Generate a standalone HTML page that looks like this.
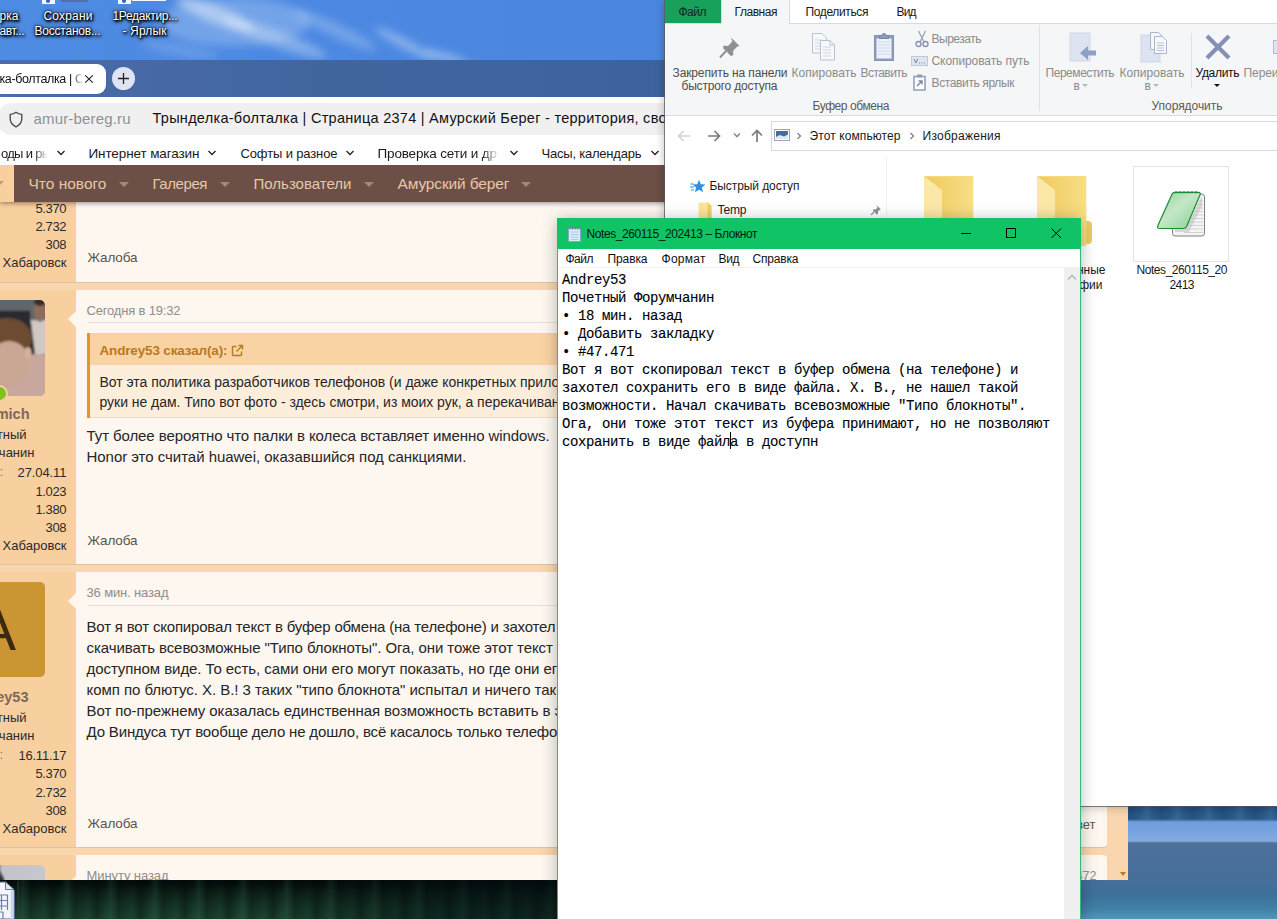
<!DOCTYPE html>
<html lang="ru"><head><meta charset="utf-8"><title>Desktop</title>
<style>
html,body{margin:0;padding:0}
body{width:1277px;height:919px;overflow:hidden;position:relative;background:#4c88e0;font-family:"Liberation Sans",sans-serif}
.a{position:absolute}
.t{position:absolute;white-space:pre;display:block}
#wall-sky{left:0;top:0;width:1277px;height:62px;background:linear-gradient(to right,#4e8be3 0%,#4c89e2 20%,#4b87e0 50%,#4983dc 100%)}
#wall-dark{left:0;top:878px;width:560px;height:41px;background:linear-gradient(to right,rgba(2,12,16,0) 50%,rgba(2,12,16,.5) 80%,rgba(2,12,16,.55) 100%),repeating-linear-gradient(to right,rgba(0,0,0,0) 0,rgba(0,0,0,.3) 9px,rgba(0,0,0,0) 17px,rgba(70,120,90,.16) 23px,rgba(0,0,0,.22) 31px,rgba(0,0,0,0) 44px),linear-gradient(to bottom,#040b0b 0,#050e0d 6px,#0c2119 14px,#153526 27px,#1b4532 41px)}
#wall-lake{left:1078px;top:800px;width:199px;height:119px;background:repeating-linear-gradient(to right,rgba(120,170,190,0) 0,rgba(120,170,190,.16) 7px,rgba(120,170,190,0) 13px,rgba(10,30,70,.15) 22px,rgba(120,170,190,0) 31px) 0 0/100% 20px no-repeat,linear-gradient(to bottom,#1f4c86 0px,#255489 8px,#2c5c8c 19px,#6e9edb 22px,#79a5e0 34px,#86abdf 41px,#4c719b 43px,#476f99 75px,#3e7099 95px,#3f7fa6 108px,#5097b7 119px)}
#br{left:0;top:60px;width:1128px;height:820px;background:#fff;overflow:hidden}
#ex{left:665px;top:0;width:620px;height:806px;background:#fff;overflow:hidden;box-shadow:0 0 0 1px rgba(90,90,90,.75),0 0 10px rgba(0,0,0,.3)}
#np{left:557px;top:218px;width:524px;height:710px;background:#fff;box-shadow:0 2px 15px rgba(0,0,0,.28)}
</style></head><body>
<div class="a" id="wall-sky"><svg class="a" style="left:0;top:0" width="670" height="62" viewBox="0 0 670 62"><defs><filter id="sb" x="-20%" y="-50%" width="140%" height="200%"><feGaussianBlur stdDeviation="4"/></filter></defs><g filter="url(#sb)" fill="#fff">
<ellipse cx="235" cy="22" rx="75" ry="24" opacity=".22"/>
<ellipse cx="215" cy="14" rx="42" ry="9" transform="rotate(22 215 14)" opacity=".42"/>
<ellipse cx="275" cy="38" rx="55" ry="8" transform="rotate(20 275 38)" opacity=".3"/>
<ellipse cx="335" cy="30" rx="45" ry="7" transform="rotate(25 335 30)" opacity=".22"/>
<ellipse cx="405" cy="44" rx="34" ry="4.500" transform="rotate(28 405 44)" opacity=".36"/>
<ellipse cx="447" cy="58" rx="24" ry="4" transform="rotate(18 447 58)" opacity=".4"/>
<ellipse cx="180" cy="50" rx="40" ry="6" transform="rotate(10 180 50)" opacity=".15"/>
</g></svg></div>
<div class="a" id="wall-dark"></div>
<div class="a" id="wall-lake"></div>

<div class="a" style="left:42px;top:0;width:13px;height:4px;background:#f4f6fa"></div><div class="a" style="left:46px;top:0;width:4px;height:3px;background:#3f62b5;border-radius:0 0 2px 2px"></div>
<div class="a" style="left:61px;top:0;width:27px;height:1.5px;background:#536fa8"></div>
<div class="a" style="left:118px;top:0;width:13px;height:4px;background:#f4f6fa"></div><div class="a" style="left:122px;top:0;width:4px;height:3px;background:#3f62b5;border-radius:0 0 2px 2px"></div>
<div class="a" style="left:132px;top:0;width:34px;height:1px;background:#f4f6fa"></div>
<span class="t" style='left:-0.5px;top:8px;font-size:12px;line-height:16px;color:#fff;letter-spacing:0.062px;text-shadow:1px 1px 2px #000,0 0 4px #000,0 0 2px #000,1px 2px 3px #000;'>рка</span>
<span class="t" style='left:-0.5px;top:23px;font-size:12px;line-height:16px;color:#fff;letter-spacing:-0.391px;text-shadow:1px 1px 2px #000,0 0 4px #000,0 0 2px #000,1px 2px 3px #000;'>авт...</span>
<span class="t" style='left:43.5px;top:8px;font-size:12px;line-height:16px;color:#fff;letter-spacing:0.185px;text-shadow:1px 1px 2px #000,0 0 4px #000,0 0 2px #000,1px 2px 3px #000;'>Сохрани</span>
<span class="t" style='left:34.5px;top:23px;font-size:12px;line-height:16px;color:#fff;letter-spacing:-0.217px;text-shadow:1px 1px 2px #000,0 0 4px #000,0 0 2px #000,1px 2px 3px #000;'>Восстанов...</span>
<span class="t" style='left:112.5px;top:8px;font-size:12px;line-height:16px;color:#fff;letter-spacing:-0.318px;text-shadow:1px 1px 2px #000,0 0 4px #000,0 0 2px #000,1px 2px 3px #000;'>1Редактир...</span>
<span class="t" style='left:122.5px;top:23px;font-size:12px;line-height:16px;color:#fff;letter-spacing:0.143px;text-shadow:1px 1px 2px #000,0 0 4px #000,0 0 2px #000,1px 2px 3px #000;'>- Ярлык</span>
<div class="a" id="br">
<div class="a" style="left:0;top:0;width:1128px;height:37px;background:linear-gradient(to right,#4b6da9 0%,#40659f 30%,#39609e 100%)"></div>
<div class="a" style="left:-20px;top:4px;width:126px;height:30px;background:#fff;border-radius:9px"></div>
<div class="a" style="left:111.5px;top:6.5px;width:23px;height:23px;border-radius:50%;background:#dfe3f3"></div>
<svg class="a" style="left:111.5px;top:6.5px" width="23" height="23" viewBox="0 0 23 23"><path d="M6 11.5h11M11.5 6v11" stroke="#222" stroke-width="1.3" fill="none"/></svg>
<svg class="a" style="left:83px;top:13px" width="12" height="12" viewBox="0 0 12 12"><path d="M2.200 2.300l7.600 7.400M9.800 2.300l-7.600 7.400" stroke="#222" stroke-width="1.100" fill="none"/></svg>
<div class="a" style="left:-4px;top:43px;width:1200px;height:32px;background:#f0f0f1;border-radius:16px"></div>
<svg class="a" style="left:9px;top:51px" width="14" height="17" viewBox="0 0 14 17"><path d="M7 1.2C5.2 2.6 3.3 3.2 1.2 3.4v4.4c0 3.6 2.2 6.3 5.8 8 3.6-1.700 5.800-4.400 5.800-8V3.400C10.700 3.200 8.800 2.600 7 1.200z" stroke="#444" stroke-width="1.300" fill="none" stroke-linejoin="round"/></svg>

<div class="a" style="left:0;top:-60px;width:0;height:0">
<span class="t" style='left:-0.5px;top:70.5px;font-size:12.5px;line-height:16px;color:#111;letter-spacing:-0.374px;-webkit-mask-image:linear-gradient(to right,#000 0,#000 72px,transparent 83px);mask-image:linear-gradient(to right,#000 0,#000 72px,transparent 83px);'>ка-болталка | С</span>
<span class="t" style='left:33.5px;top:108.5px;font-size:15px;line-height:20px;color:#8f9094;letter-spacing:0.163px;'>amur-bereg.ru</span>
<span class="t" style='left:152.5px;top:109px;font-size:14.5px;line-height:19px;color:#111;letter-spacing:0.274px;'>Трынделка-болталка | Страница 2374 | Амурский Берег - территория, сво</span>
<span class="t" style='left:1px;top:144.5px;font-size:13px;line-height:17px;color:#1a1a1a;letter-spacing:-0.705px;-webkit-mask-image:linear-gradient(to right,#000 0,#000 33px,transparent 47px);mask-image:linear-gradient(to right,#000 0,#000 33px,transparent 47px);'>оды и ры</span>
<span class="t" style='left:88.5px;top:144.5px;font-size:13.5px;line-height:18px;color:#1a1a1a;letter-spacing:-0.108px;'>Интернет магазин</span>
<span class="t" style='left:240.5px;top:145px;font-size:13px;line-height:17px;color:#1a1a1a;letter-spacing:-0.133px;'>Софты и разное</span>
<span class="t" style='left:377.5px;top:144.5px;font-size:13.5px;line-height:18px;color:#1a1a1a;letter-spacing:-0.163px;-webkit-mask-image:linear-gradient(to right,#000 0,#000 105px,transparent 121px);mask-image:linear-gradient(to right,#000 0,#000 105px,transparent 121px);'>Проверка сети и др.</span>
<span class="t" style='left:541.5px;top:145px;font-size:13px;line-height:17px;color:#1a1a1a;letter-spacing:-0.213px;'>Часы, календарь</span>
<svg class="a" style="left:55.5px;top:149px" width="10" height="8" viewBox="0 0 10 8"><path d="M1.5 2l3.500 3.500L8.500 2" stroke="#222" stroke-width="1.300" fill="none"/></svg>
<svg class="a" style="left:207px;top:149px" width="10" height="8" viewBox="0 0 10 8"><path d="M1.5 2l3.500 3.500L8.500 2" stroke="#222" stroke-width="1.300" fill="none"/></svg>
<svg class="a" style="left:344.5px;top:149px" width="10" height="8" viewBox="0 0 10 8"><path d="M1.5 2l3.500 3.500L8.500 2" stroke="#222" stroke-width="1.300" fill="none"/></svg>
<svg class="a" style="left:508.5px;top:149px" width="10" height="8" viewBox="0 0 10 8"><path d="M1.5 2l3.500 3.500L8.500 2" stroke="#222" stroke-width="1.300" fill="none"/></svg>
<svg class="a" style="left:650px;top:149px" width="10" height="8" viewBox="0 0 10 8"><path d="M1.5 2l3.500 3.500L8.500 2" stroke="#222" stroke-width="1.300" fill="none"/></svg>
</div>
<div class="a" id="forum" style="left:0;top:105px;width:1128px;height:715px;background:#f9d6ae;overflow:hidden">
<div class="a" style="left:-4px;top:30px;width:1111px;height:88px;background:#fdf7f0;border-bottom:1px solid #dcc3a8;border-radius:4px;box-sizing:border-box"></div>
<div class="a" style="left:0;top:30px;width:76.400px;height:87px;background:#f8cf9f"></div>
<div class="a" style="left:-4px;top:125px;width:1111px;height:275px;background:#fdf7f0;border-bottom:1px solid #dcc3a8;border-radius:4px;box-sizing:border-box"></div>
<div class="a" style="left:0;top:125px;width:76.400px;height:274px;background:#f8cf9f"></div>
<div class="a" style="left:-4px;top:407px;width:1111px;height:276px;background:#fdf7f0;border-bottom:1px solid #dcc3a8;border-radius:4px;box-sizing:border-box"></div>
<div class="a" style="left:0;top:407px;width:76.400px;height:275px;background:#f8cf9f"></div>
<div class="a" style="left:-4px;top:690px;width:1111px;height:45px;background:#fdf7f0;border-bottom:1px solid #dcc3a8;border-radius:4px;box-sizing:border-box"></div>
<div class="a" style="left:0;top:690px;width:76.400px;height:44px;background:#f8cf9f"></div>
<div class="a" style="left:68px;top:146px;width:0;height:0;border-style:solid;border-width:8px 8px 8px 0;border-color:transparent #fdf7f0 transparent transparent"></div>
<div class="a" style="left:68px;top:428px;width:0;height:0;border-style:solid;border-width:8px 8px 8px 0;border-color:transparent #fdf7f0 transparent transparent"></div>
<div class="a" style="left:68px;top:711px;width:0;height:0;border-style:solid;border-width:8px 8px 8px 0;border-color:transparent #fdf7f0 transparent transparent"></div>
<div class="a" style="left:87px;top:157px;width:1010px;height:1px;background:#e6dbe0"></div>
<div class="a" style="left:87px;top:440px;width:1010px;height:1px;background:#e6dbe0"></div>
<div class="a" style="left:0;top:0;width:1128px;height:37px;background:#6c4f47;box-shadow:0 1px 5px rgba(0,0,0,.45)"></div>
<div class="a" style="left:0;top:0;width:14px;height:37px;background:#f8cf9f"></div>
<div class="a" style="left:-6px;top:16px;width:0;height:0;border-style:solid;border-width:5px 5px 0 5px;border-color:#c79a62 transparent transparent transparent"></div>
<div class="a" style="left:119px;top:17px;width:0;height:0;border-style:solid;border-width:5px 5px 0 5px;border-color:#a98771 transparent transparent transparent"></div>
<div class="a" style="left:220px;top:17px;width:0;height:0;border-style:solid;border-width:5px 5px 0 5px;border-color:#a98771 transparent transparent transparent"></div>
<div class="a" style="left:363.5px;top:17px;width:0;height:0;border-style:solid;border-width:5px 5px 0 5px;border-color:#a98771 transparent transparent transparent"></div>
<div class="a" style="left:521px;top:17px;width:0;height:0;border-style:solid;border-width:5px 5px 0 5px;border-color:#a98771 transparent transparent transparent"></div>
<svg class="a" style="left:-51px;top:135px;border-radius:5px" width="96" height="96" viewBox="0 0 96 96"><defs><filter id="bl" x="-10%" y="-10%" width="120%" height="120%"><feGaussianBlur stdDeviation="1.300"/></filter><clipPath id="cp"><rect width="96" height="96" rx="5"/></clipPath></defs>
<g clip-path="url(#cp)"><rect width="96" height="96" fill="#60666a"/><g filter="url(#bl)">
<rect x="-5" y="11" width="86" height="22" fill="#2a2c2f"/>
<rect x="82" y="20" width="20" height="34" fill="#d0c9c3"/>
<path d="M76 24l6-2 4 32h-10z" fill="#2c2c2e"/>
<ellipse cx="91" cy="11" rx="6.500" ry="11" fill="#8d6c5c"/>
<ellipse cx="91" cy="2" rx="6" ry="4" fill="#3a2e28"/>
<rect x="-5" y="80" width="110" height="20" fill="#c4a193"/>
<ellipse cx="90" cy="84" rx="32" ry="30" fill="#c8a89c"/>
<ellipse cx="58" cy="38" rx="25" ry="20" fill="#6d4c33"/>
<ellipse cx="60" cy="64" rx="21" ry="23" fill="#caa695"/>
<ellipse cx="79" cy="53" rx="3.500" ry="6" fill="#d6b09e"/>
<path d="M40 44q18-10 36 2l-2-12-30-4z" fill="#6d4c33"/>
</g></g></svg>
<div class="a" style="left:-9px;top:220px;width:13px;height:13px;border-radius:50%;background:#7dc31f;border:2px solid #f8cf9f"></div>

<div class="a" style="left:-51px;top:417px;width:96px;height:95px;border-radius:5px;background:#cc9534;overflow:hidden"><span class="t" style="left:0;top:0;width:96px;text-align:center;font-size:57px;line-height:96px;color:#3b2a10">A</span></div>
<div class="a" style="left:-51px;top:700px;width:96px;height:40px;border-radius:5px;background:radial-gradient(ellipse 9px 22px at 49px 26px,#2b2a28 0,#3a3836 70%,rgba(60,58,56,0) 100%),linear-gradient(to right,#333 0,#555 48px,#c3c3c7 53px,#c8c8cc 96px)"></div>
<div class="a" style="left:87px;top:168px;width:1010px;height:84px;background:#fdeddb;border-bottom:1px solid #efdcc6"></div>
<div class="a" style="left:87px;top:168px;width:1010px;height:32px;background:#f9d3a4"></div>
<div class="a" style="left:87px;top:168px;width:3px;height:85px;background:#e8961d"></div>
<svg class="a" style="left:231px;top:179px" width="13" height="13" viewBox="0 0 13 13"><path d="M5.500 2.500H2.200a.7.7 0 0 0-.7.7v7.600a.7.7 0 0 0 .7.7h7.600a.7.7 0 0 0 .7-.7V7.500M7.500 1.500h4v4M11.500 1.500L5.500 7.500" stroke="#b9791f" stroke-width="1.400" fill="none"/></svg>
<div class="a" style="left:0;top:-165px;width:0;height:0">
<span class="t" style='left:28.5px;top:174px;font-size:15.5px;line-height:20px;color:#e6c8a6;letter-spacing:0.002px;'>Что нового</span>
<span class="t" style='left:152.5px;top:174px;font-size:15px;line-height:20px;color:#e6c8a6;letter-spacing:-0.422px;'>Галерея</span>
<span class="t" style='left:253.5px;top:174px;font-size:15px;line-height:20px;color:#e6c8a6;letter-spacing:0.009px;'>Пользователи</span>
<span class="t" style='left:397.5px;top:174px;font-size:15.5px;line-height:20px;color:#e6c8a6;letter-spacing:-0.135px;'>Амурский берег</span>
<span class="t" style='left:35.5px;top:200px;font-size:13px;line-height:17px;color:#2b2b2b;letter-spacing:-0.387px;'>5.370</span>
<span class="t" style='left:35.5px;top:218.1px;font-size:13px;line-height:17px;color:#2b2b2b;letter-spacing:-0.387px;'>2.732</span>
<span class="t" style='left:45.5px;top:236.2px;font-size:13px;line-height:17px;color:#2b2b2b;letter-spacing:-0.352px;'>308</span>
<span class="t" style='left:2.5px;top:254.3px;font-size:13px;line-height:17px;color:#2b2b2b;letter-spacing:0.039px;'>Хабаровск</span>
<span class="t" style='left:87.5px;top:248.5px;font-size:13.5px;line-height:18px;color:#5d5349;letter-spacing:-0.119px;'>Жалоба</span>
<span class="t" style='left:87.5px;top:531.5px;font-size:13.5px;line-height:18px;color:#5d5349;letter-spacing:-0.119px;'>Жалоба</span>
<span class="t" style='left:87.5px;top:814.5px;font-size:13.5px;line-height:18px;color:#5d5349;letter-spacing:-0.119px;'>Жалоба</span>
<span class="t" style='left:86.5px;top:302px;font-size:13px;line-height:17px;color:#8e8e8e;letter-spacing:-0.177px;'>Сегодня в 19:32</span>
<span class="t" style='left:86.5px;top:584px;font-size:13px;line-height:17px;color:#8e8e8e;letter-spacing:-0.143px;'>36 мин. назад</span>
<span class="t" style='left:86.5px;top:867px;font-size:13px;line-height:17px;color:#8e8e8e;letter-spacing:-0.094px;'>Минуту назад</span>
<span class="t" style='left:99.5px;top:341.5px;font-size:13.5px;line-height:18px;color:#b9791f;font-weight:700;letter-spacing:-0.157px;'>Andrey53 сказал(а):</span>
<span class="t" style='left:99.5px;top:372.5px;font-size:14px;line-height:18px;color:#262626;letter-spacing:-0.029px;'>Вот эта политика разработчиков телефонов (и даже конкретных прило</span>
<span class="t" style='left:99.5px;top:393px;font-size:14px;line-height:18px;color:#262626;letter-spacing:-0.031px;'>руки не дам. Типо вот фото - здесь смотри, из моих рук, а перекачиван</span>
<span class="t" style='left:86.5px;top:426px;font-size:15px;line-height:20px;color:#262626;letter-spacing:-0.088px;'>Тут более вероятно что палки в колеса вставляет именно windows.</span>
<span class="t" style='left:86.5px;top:447px;font-size:15px;line-height:20px;color:#262626;letter-spacing:-0.032px;'>Honor это считай huawei, оказавшийся под санкциями.</span>
<span class="t" style='left:-4.34375px;top:404.5px;font-size:14.5px;line-height:19px;color:#7d6858;font-weight:700;'>mich</span>
<span class="t" style='left:-33.1094px;top:425.5px;font-size:13px;line-height:17px;color:#2b2b2b;'>Почетный</span>
<span class="t" style='left:-40.625px;top:443.5px;font-size:13px;line-height:17px;color:#2b2b2b;'>Форумчанин</span>
<span class="t" style='left:-0.5px;top:463px;font-size:13.5px;line-height:18px;color:#8a7768;'>:</span>
<span class="t" style='left:17.5px;top:464.1px;font-size:13px;line-height:17px;color:#2b2b2b;letter-spacing:-0.092px;'>27.04.11</span>
<span class="t" style='left:35.5px;top:482.6px;font-size:13px;line-height:17px;color:#2b2b2b;letter-spacing:-0.387px;'>1.023</span>
<span class="t" style='left:35.5px;top:500.6px;font-size:13px;line-height:17px;color:#2b2b2b;letter-spacing:-0.387px;'>1.380</span>
<span class="t" style='left:45.5px;top:519.1px;font-size:13px;line-height:17px;color:#2b2b2b;letter-spacing:-0.352px;'>308</span>
<span class="t" style='left:2.5px;top:537.1px;font-size:13px;line-height:17px;color:#2b2b2b;letter-spacing:0.039px;'>Хабаровск</span>
<span class="t" style='left:86.5px;top:617px;font-size:15px;line-height:20px;color:#262626;letter-spacing:-0.182px;'>Вот я вот скопировал текст в буфер обмена (на телефоне) и захотел</span>
<span class="t" style='left:86.5px;top:638px;font-size:15px;line-height:20px;color:#262626;letter-spacing:-0.079px;'>скачивать всевозможные &quot;Типо блокноты&quot;. Ога, они тоже этот текст</span>
<span class="t" style='left:86.5px;top:659px;font-size:15px;line-height:20px;color:#262626;letter-spacing:-0.069px;'>доступном виде. То есть, сами они его могут показать, но где они ег</span>
<span class="t" style='left:86.5px;top:680px;font-size:15px;line-height:20px;color:#262626;letter-spacing:-0.04px;'>комп по блютус. Х. В.! 3 таких &quot;типо блокнота&quot; испытал и ничего так</span>
<span class="t" style='left:86.5px;top:701px;font-size:15px;line-height:20px;color:#262626;letter-spacing:-0.07px;'>Вот по-прежнему оказалась единственная возможность вставить в э</span>
<span class="t" style='left:86.5px;top:722px;font-size:15px;line-height:20px;color:#262626;letter-spacing:-0.163px;'>До Виндуса тут вообще дело не дошло, всё касалось только телефон</span>
<span class="t" style='left:-37.5938px;top:687.5px;font-size:14.5px;line-height:19px;color:#7d6858;font-weight:700;'>Andrey53</span>
<span class="t" style='left:-33.1094px;top:708.5px;font-size:13px;line-height:17px;color:#2b2b2b;'>Почетный</span>
<span class="t" style='left:-40.625px;top:726.5px;font-size:13px;line-height:17px;color:#2b2b2b;'>Форумчанин</span>
<span class="t" style='left:-0.5px;top:746px;font-size:13.5px;line-height:18px;color:#8a7768;'>:</span>
<span class="t" style='left:18.5px;top:747.1px;font-size:13px;line-height:17px;color:#2b2b2b;letter-spacing:-0.234px;'>16.11.17</span>
<span class="t" style='left:35.5px;top:765.1px;font-size:13px;line-height:17px;color:#2b2b2b;letter-spacing:-0.387px;'>5.370</span>
<span class="t" style='left:35.5px;top:783.6px;font-size:13px;line-height:17px;color:#2b2b2b;letter-spacing:-0.387px;'>2.732</span>
<span class="t" style='left:45.5px;top:802.1px;font-size:13px;line-height:17px;color:#2b2b2b;letter-spacing:-0.352px;'>308</span>
<span class="t" style='left:2.5px;top:820.1px;font-size:13px;line-height:17px;color:#2b2b2b;letter-spacing:0.039px;'>Хабаровск</span>
<span class="t" style='left:1059.91px;top:815.5px;font-size:13px;line-height:17px;color:#5d5349;'>Ответ</span>
<span class="t" style='left:1051.31px;top:867.5px;font-size:12.5px;line-height:16px;color:#8e8e8e;'>#47.472</span>
</div>
<div class="a" style="left:1120px;top:707px;width:0;height:0;border-style:solid;border-width:4px 3.5px 0 3.5px;border-color:#b9791f transparent transparent transparent"></div>
</div>
</div>
<svg class="a" style="left:0;top:881px" width="20" height="38" viewBox="0 0 20 38"><path d="M-6 1H5.500l8.800 8.500V38H-6z" fill="#f3f5fb" stroke="#55668a" stroke-width="1.200"/><path d="M5.500 1v7.500h8.500z" fill="#dfe6f3" stroke="#6a7a9c" stroke-width="1"/><path d="M-2 14h9.500v15M-2 19.500h9.500M-2 25h9.500M1.500 14v15M-2 31v7M3 31v7M-2 31h5" stroke="#6b7fa8" stroke-width="1.200" fill="none"/><path d="M12 10v28" stroke="#c9d3ea" stroke-width="2.500"/><path d="M18 0v38" stroke="#2c3f3a" stroke-width="1"/></svg>
<div class="a" id="ex">
<div class="a" style="left:0;top:23px;width:620px;height:93px;background:#f5f6f7;border-top:1px solid #dadbdc;border-bottom:1px solid #dadbdc;box-sizing:border-box"></div>
<div class="a" style="left:0;top:0;width:56px;height:23px;background:#19a05b"></div>
<div class="a" style="left:56px;top:0;width:69px;height:24px;background:#f5f6f7;border:1px solid #dadbdc;border-bottom:none;border-top:none;box-sizing:border-box"></div>
<div class="a" style="left:374px;top:25px;width:1px;height:86px;background:#e2e3e4"></div>
<div class="a" style="left:526px;top:33px;width:1px;height:55px;background:#e2e3e4"></div>
<div class="a" style="left:106px;top:121px;width:520px;height:30px;border:1px solid #d9d9d9;box-sizing:border-box;background:#fff"></div>
<div class="a" style="left:221px;top:157px;width:1px;height:660px;background:#f0f0f0"></div>

<svg class="a" style="left:52px;top:34px" width="26" height="26" viewBox="0 0 26 26"><path d="M14 3.500l8.500 8.500-2.200.6-4.300 4.300.4 4.100-2.500 1-8-8 1-2.500 4.100.4 4.300-4.300z" fill="#8e9094"/><path d="M9 17l-6 6.500" stroke="#8e9094" stroke-width="2"/></svg>
<svg class="a" style="left:145px;top:32px" width="28" height="30" viewBox="0 0 28 30"><path d="M2.500 1.500h9.500l4.500 4.500v15h-14z" fill="#f6f8fb" stroke="#b8c2d3"/><path d="M5 8h8M5 11h8M5 14h8M5 17h8" stroke="#d0d7e4"/><path d="M10.500 8.500h9.500l4.500 4.500v15h-14z" fill="#f6f8fb" stroke="#b8c2d3"/><path d="M13 15h8M13 18h8M13 21h8M13 24h8" stroke="#d0d7e4"/><path d="M20 8.500v4.500h4.500" fill="none" stroke="#b8c2d3"/></svg>
<svg class="a" style="left:208px;top:31px" width="22" height="31" viewBox="0 0 22 31"><rect x="1.500" y="4.500" width="19" height="25" fill="#8e9bbb" stroke="#8593b5"/><rect x="3.500" y="7.500" width="15" height="20" fill="#eef2fa"/><path d="M5 11h12M5 14h12M5 17h12M5 20h12M5 23h12" stroke="#cfd8ea"/><path d="M6.500 7.500v-3h2.500a2 2 0 0 1 4 0h2.500v3z" fill="#8e9bbb" stroke="#7986a8"/></svg>
<svg class="a" style="left:249.500px;top:30px" width="14" height="18" viewBox="0 0 14 18"><path d="M3.500 1l5.500 11M10.500 1L5 12" stroke="#9aa0b0" stroke-width="1.300" fill="none"/><circle cx="3.500" cy="14" r="2.500" fill="none" stroke="#8a93b3" stroke-width="1.400"/><circle cx="10.500" cy="14" r="2.500" fill="none" stroke="#8a93b3" stroke-width="1.400"/></svg>
<svg class="a" style="left:246px;top:56px" width="17" height="11" viewBox="0 0 17 11"><rect x=".5" y=".5" width="16" height="9" fill="#dfe4f0" stroke="#c0c8dc"/><path d="M3 3l2 4 1.500-4M8 7h1M10.500 7h1M13 7h1" stroke="#7b84a3" stroke-width="1" fill="none"/></svg>
<svg class="a" style="left:248px;top:74px" width="13" height="17" viewBox="0 0 13 17"><rect x="1" y="2.500" width="11" height="13.500" fill="#fff" stroke="#8e9bbb" stroke-width="1.500"/><rect x="4" y=".5" width="5" height="3" fill="#8e9bbb"/><path d="M4 12l4.500-4.500M5.500 7h3.500v3.500" stroke="#7986a8" stroke-width="1.400" fill="none"/></svg>
<svg class="a" style="left:404px;top:32px" width="30" height="31" viewBox="0 0 30 31"><rect x="1" y="1" width="20" height="28" fill="#dde3f0" stroke="#d0d7e8"/><path d="M27 18.500h-8v-4.500l-8 7 8 7v-4.500h8z" fill="#8ea0c4"/></svg>
<svg class="a" style="left:475px;top:31px" width="30" height="32" viewBox="0 0 30 32"><rect x="1" y="4" width="19" height="27" fill="#dde3f0" stroke="#d0d7e8"/><path d="M10.500 1.500h8l4 4v13h-12z" fill="#f6f8fb" stroke="#aab6cf"/><path d="M14.500 5.500h8l4 4v13h-12z" fill="#f6f8fb" stroke="#aab6cf"/><path d="M17 12h7M17 14.500h7M17 17h7M17 19.500h7" stroke="#b7c2d8"/></svg>
<svg class="a" style="left:539px;top:33px" width="28" height="28" viewBox="0 0 28 28"><path d="M3 3l22 22M25 3L3 25" stroke="#8590b4" stroke-width="4.200" fill="none"/></svg>
<div class="a" style="left:608px;top:40px;width:12px;height:12px;background:#dfe4f0;border:1px solid #b4bdd4"></div>

<div class="a" style="left:417px;top:84px;width:0;height:0;border-style:solid;border-width:3px 3px 0 3px;border-color:#b9b9b9 transparent transparent transparent"></div>
<div class="a" style="left:488px;top:84px;width:0;height:0;border-style:solid;border-width:3px 3px 0 3px;border-color:#b9b9b9 transparent transparent transparent"></div>
<div class="a" style="left:549px;top:84px;width:0;height:0;border-style:solid;border-width:3px 3px 0 3px;border-color:#111 transparent transparent transparent"></div>
<svg class="a" style="left:12px;top:129px" width="14" height="14" viewBox="0 0 14 14"><path d="M13 7H1.500M6.500 2l-5 5 5 5" stroke="#d4d4d4" stroke-width="1.700" fill="none"/></svg>
<svg class="a" style="left:42px;top:129px" width="14" height="14" viewBox="0 0 14 14"><path d="M1 7h11.500M7.500 2l5 5-5 5" stroke="#7a7a7a" stroke-width="1.700" fill="none"/></svg>
<svg class="a" style="left:68px;top:132px" width="8" height="6" viewBox="0 0 8 6"><path d="M1 1.500l3 3 3-3" stroke="#8a8a8a" stroke-width="1.600" fill="none"/></svg>
<svg class="a" style="left:85px;top:129px" width="14" height="14" viewBox="0 0 14 14"><path d="M7 13V1.500M2 6.500l5-5 5 5" stroke="#7a7a7a" stroke-width="1.700" fill="none"/></svg>
<svg class="a" style="left:109px;top:129px" width="16" height="12" viewBox="0 0 16 12"><rect x=".5" y=".5" width="15" height="11" fill="#fff" stroke="#9aa5b5"/><rect x="2" y="2" width="12" height="8" fill="#3f6f9f"/><path d="M2 8l4-2 4 1.500 4-2V10H2z" fill="#dfe9f2"/></svg>
<svg class="a" style="left:131px;top:132px" width="6" height="8" viewBox="0 0 6 8"><path d="M1.500 1l3 3-3 3" stroke="#777" stroke-width="1.100" fill="none"/></svg>
<svg class="a" style="left:244px;top:132px" width="6" height="8" viewBox="0 0 6 8"><path d="M1.500 1l3 3-3 3" stroke="#777" stroke-width="1.100" fill="none"/></svg>
<svg class="a" style="left:25px;top:179px" width="16" height="15" viewBox="0 0 16 15"><path d="M9 .8l1.800 4.500 4.700.3-3.600 3 1.200 4.700L9 10.700 4.900 13.300l1.200-4.700-3.600-3 4.700-.3z" fill="#2f8fe0"/><path d="M0 8h4M1 11h3M.5 5h3" stroke="#2f8fe0" stroke-width="1"/></svg>
<svg class="a" style="left:33px;top:201px" width="14" height="17" viewBox="0 0 14 17"><path d="M.5 1.500h9l4 3V17H.5z" fill="#fbe59a"/><path d="M9.500 1.500l4 3V17h-4z" fill="#f0ce68"/></svg>
<svg class="a" style="left:205px;top:204px" width="12" height="12" viewBox="0 0 12 12"><path d="M6.500 1l4.500 4.500-1.200.3-2 2 .2 2.200-1.200.5-4-4 .5-1.200 2.200.2 2-2z" fill="#8e9094"/><path d="M4 8l-3 3" stroke="#8e9094" stroke-width="1.200"/></svg>

<svg class="a" style="left:259px;top:176px" width="58" height="70" viewBox="0 0 58 70"><defs><linearGradient id="fg1" x1="0" y1="0" x2="1" y2="0"><stop offset="0" stop-color="#efc95e"/><stop offset="1" stop-color="#f8de86"/></linearGradient></defs><path d="M49 45h2.500q3.500.5 3.500 4v15q0 4-4 4H49z" fill="#efcb68"/><path d="M0 0h49.300v70H0z" fill="url(#fg1)"/><path d="M0 0l18 14v56H0z" fill="#fbe7a6"/><path d="M0 0h49.300v1H0z" fill="#f6d981"/></svg>
<svg class="a" style="left:372px;top:176px" width="58" height="70" viewBox="0 0 58 70"><defs><linearGradient id="fg2" x1="0" y1="0" x2="1" y2="0"><stop offset="0" stop-color="#efc95e"/><stop offset="1" stop-color="#f8de86"/></linearGradient></defs><path d="M49 45h2.500q3.500.5 3.500 4v15q0 4-4 4H49z" fill="#efcb68"/><path d="M0 0h49.300v70H0z" fill="url(#fg2)"/><path d="M0 0l18 14v56H0z" fill="#fbe7a6"/><path d="M0 0h49.300v1H0z" fill="#f6d981"/></svg>
<div class="a" style="left:468px;top:166px;width:96px;height:96px;border:1px solid #e3e3e3;box-sizing:border-box;background:#fff"></div>
<svg class="a" style="left:488px;top:188px" width="56" height="52" viewBox="0 0 56 52"><defs><linearGradient id="gc" x1="0" y1="0" x2="1" y2="1"><stop offset="0" stop-color="#8fd49a"/><stop offset=".45" stop-color="#c4e8c8"/><stop offset="1" stop-color="#86cf92"/></linearGradient></defs><path d="M19.500 22L44 6h5q2.500.5 2.500 3v36.500q0 2.500-2.500 2.500H22q-2.500 0-2.500-2.500z" fill="#f4f4f4" stroke="#808080" stroke-width="1"/><path d="M31 44.500h19M33 41h17M35 37.500h15M36.500 34h13.500M38 30.500h12M39.500 27h10.500M41 23.500h9M42.500 20h7.500M44 16.500h6M45.500 13h4.500" stroke="#d2d2d2" stroke-width="1"/><path d="M33 40l16-32v10L36 44H22v-3z" fill="#bdbdbd" opacity=".55"/><path d="M22 4.300H45q3.200 0 1.900 3L33.600 38.500q-1 2-3.400 2H7q-3.600 0-2-3.200L19 6.300q1-2 3-2z" fill="url(#gc)" stroke="#1d8a36" stroke-width="1.200"/><path d="M22 4.300h23.500" stroke="#1d8a36" stroke-width="1.800" stroke-dasharray="2.400 1.500"/></svg>

<div class="a" style="left:-665px;top:0;width:0;height:0">
<span class="t" style='left:678.5px;top:4px;font-size:12px;line-height:16px;color:#0f2b1b;letter-spacing:-0.505px;'>Файл</span>
<span class="t" style='left:734.5px;top:4px;font-size:12px;line-height:16px;color:#1a1a1a;letter-spacing:-0.448px;'>Главная</span>
<span class="t" style='left:805.5px;top:4px;font-size:12px;line-height:16px;color:#1a1a1a;letter-spacing:-0.363px;'>Поделиться</span>
<span class="t" style='left:896.5px;top:4px;font-size:12px;line-height:16px;color:#1a1a1a;letter-spacing:-0.859px;'>Вид</span>
<span class="t" style='left:672.5px;top:65px;font-size:12px;line-height:16px;color:#4d4d4d;letter-spacing:-0.123px;'>Закрепить на панели</span>
<span class="t" style='left:681.5px;top:78px;font-size:12px;line-height:16px;color:#4d4d4d;letter-spacing:-0.197px;'>быстрого доступа</span>
<span class="t" style='left:791.5px;top:65px;font-size:12px;line-height:16px;color:#8b8b8b;letter-spacing:0.042px;'>Копировать</span>
<span class="t" style='left:860.5px;top:65px;font-size:12px;line-height:16px;color:#8b8b8b;letter-spacing:-0.554px;'>Вставить</span>
<span class="t" style='left:931.5px;top:31px;font-size:12px;line-height:16px;color:#8b8b8b;letter-spacing:-0.482px;'>Вырезать</span>
<span class="t" style='left:931.5px;top:53px;font-size:12px;line-height:16px;color:#8b8b8b;letter-spacing:-0.084px;'>Скопировать путь</span>
<span class="t" style='left:931.5px;top:75px;font-size:12px;line-height:16px;color:#8b8b8b;letter-spacing:-0.373px;'>Вставить ярлык</span>
<span class="t" style='left:812.5px;top:98px;font-size:12px;line-height:16px;color:#5a5a5a;letter-spacing:-0.413px;'>Буфер обмена</span>
<span class="t" style='left:1045.5px;top:65px;font-size:12px;line-height:16px;color:#8b8b8b;letter-spacing:-0.453px;'>Переместить</span>
<span class="t" style='left:1073.5px;top:78px;font-size:12px;line-height:16px;color:#8b8b8b;'>в</span>
<span class="t" style='left:1119.5px;top:65px;font-size:12px;line-height:16px;color:#8b8b8b;letter-spacing:0.042px;'>Копировать</span>
<span class="t" style='left:1144.5px;top:78px;font-size:12px;line-height:16px;color:#8b8b8b;'>в</span>
<span class="t" style='left:1195.5px;top:65px;font-size:12px;line-height:16px;color:#111;letter-spacing:-0.305px;'>Удалить</span>
<span class="t" style='left:1243.5px;top:65px;font-size:12px;line-height:16px;color:#8b8b8b;letter-spacing:-0.082px;'>Переименовать</span>
<span class="t" style='left:1151.5px;top:98px;font-size:12px;line-height:16px;color:#5a5a5a;letter-spacing:-0.042px;'>Упорядочить</span>
<span class="t" style='left:809.5px;top:128px;font-size:12px;line-height:16px;color:#1a1a1a;letter-spacing:0.097px;'>Этот компьютер</span>
<span class="t" style='left:922.5px;top:128px;font-size:12px;line-height:16px;color:#1a1a1a;letter-spacing:0.258px;'>Изображения</span>
<span class="t" style='left:709.5px;top:178px;font-size:12px;line-height:16px;color:#1a1a1a;letter-spacing:-0.088px;'>Быстрый доступ</span>
<span class="t" style='left:717.5px;top:202px;font-size:12px;line-height:16px;color:#1a1a1a;letter-spacing:-0.115px;'>Temp</span>
<span class="t" style='left:1076.94px;top:262px;font-size:12px;line-height:16px;color:#1a1a1a;'>нные</span>
<span class="t" style='left:1079.22px;top:277px;font-size:12px;line-height:16px;color:#1a1a1a;'>фии</span>
<span class="t" style='left:1136.5px;top:262px;font-size:12px;line-height:16px;color:#1a1a1a;letter-spacing:-0.443px;'>Notes_260115_20</span>
<span class="t" style='left:1169.5px;top:277px;font-size:12px;line-height:16px;color:#1a1a1a;letter-spacing:-0.568px;'>2413</span>
</div>
</div>
<div class="a" id="np">
<div class="a" style="left:0;top:0;width:524px;height:710px;border:1px solid #35b778;box-sizing:border-box"></div>
<div class="a" style="left:0;top:0;width:524px;height:31px;background:#10c465"></div>
<div class="a" style="left:1px;top:49px;width:522px;height:1px;background:#f0f0f0"></div>
<div class="a" style="left:507px;top:50px;width:16px;height:660px;background:#f0f0f0"></div>
<svg class="a" style="left:510px;top:56px" width="10" height="7" viewBox="0 0 10 7"><path d="M1 5.500l4-4 4 4" stroke="#b8b8b8" stroke-width="1.600" fill="none"/></svg>
<svg class="a" style="left:10px;top:8px" width="15" height="16" viewBox="0 0 15 16"><rect x="1.500" y="2.500" width="12" height="13" fill="#d7ecf8" stroke="#7fa6c4"/><path d="M3.500 6h8M3.500 8.500h8M3.500 11h8M3.500 13.500h8" stroke="#9fc4dc" stroke-width=".8"/><path d="M3 .5v3M5.500 .5v3M8 .5v3M10.500 .5v3M13 .5v3" stroke="#5c7f9a" stroke-width="1"/></svg>
<svg class="a" style="left:403px;top:9px" width="12" height="12" viewBox="0 0 12 12"><path d="M1 6.500h10" stroke="#000" stroke-width="1"/></svg>
<svg class="a" style="left:448px;top:9px" width="12" height="12" viewBox="0 0 12 12"><rect x="1.500" y="1.500" width="9" height="9" stroke="#000" stroke-width="1" fill="none"/></svg>
<svg class="a" style="left:493px;top:9px" width="13" height="13" viewBox="0 0 13 13"><path d="M1.500 1.500l9.500 9.500M11 1.500L1.500 11" stroke="#000" stroke-width="1" fill="none"/></svg>
<div class="a" style="left:173px;top:214px;width:1px;height:17px;background:#000"></div>

<div class="a" style="left:-557px;top:-218px;width:0;height:0">
<span class="t" style='left:586.5px;top:226px;font-size:12px;line-height:16px;color:#06170e;letter-spacing:-0.414px;'>Notes_260115_202413 – Блокнот</span>
<span class="t" style='left:565.5px;top:251px;font-size:12px;line-height:16px;color:#111;letter-spacing:-0.505px;'>Файл</span>
<span class="t" style='left:607.5px;top:251px;font-size:12px;line-height:16px;color:#111;letter-spacing:-0.109px;'>Правка</span>
<span class="t" style='left:661.5px;top:251px;font-size:12px;line-height:16px;color:#111;letter-spacing:0.272px;'>Формат</span>
<span class="t" style='left:718.5px;top:251px;font-size:12px;line-height:16px;color:#111;letter-spacing:-0.359px;'>Вид</span>
<span class="t" style='left:752.5px;top:251px;font-size:12px;line-height:16px;color:#111;letter-spacing:-0.18px;'>Справка</span>
<span class="t" style='left:562px;top:271px;font-size:14px;line-height:18px;color:#000;font-family:"Liberation Mono", monospace;letter-spacing:-0.4px;-webkit-text-stroke:.1px #000;'>Andrey53</span>
<span class="t" style='left:562px;top:289px;font-size:14px;line-height:18px;color:#000;font-family:"Liberation Mono", monospace;letter-spacing:-0.4px;-webkit-text-stroke:.1px #000;'>Почетный Форумчанин</span>
<span class="t" style='left:562px;top:307px;font-size:14px;line-height:18px;color:#000;font-family:"Liberation Mono", monospace;letter-spacing:-0.4px;-webkit-text-stroke:.1px #000;'>• 18 мин. назад</span>
<span class="t" style='left:562px;top:325px;font-size:14px;line-height:18px;color:#000;font-family:"Liberation Mono", monospace;letter-spacing:-0.4px;-webkit-text-stroke:.1px #000;'>• Добавить закладку</span>
<span class="t" style='left:562px;top:343px;font-size:14px;line-height:18px;color:#000;font-family:"Liberation Mono", monospace;letter-spacing:-0.4px;-webkit-text-stroke:.1px #000;'>• #47.471</span>
<span class="t" style='left:562px;top:361px;font-size:14px;line-height:18px;color:#000;font-family:"Liberation Mono", monospace;letter-spacing:-0.4px;-webkit-text-stroke:.1px #000;'>Вот я вот скопировал текст в буфер обмена (на телефоне) и</span>
<span class="t" style='left:562px;top:379px;font-size:14px;line-height:18px;color:#000;font-family:"Liberation Mono", monospace;letter-spacing:-0.4px;-webkit-text-stroke:.1px #000;'>захотел сохранить его в виде файла. Х. В., не нашел такой</span>
<span class="t" style='left:562px;top:397px;font-size:14px;line-height:18px;color:#000;font-family:"Liberation Mono", monospace;letter-spacing:-0.4px;-webkit-text-stroke:.1px #000;'>возможности. Начал скачивать всевозможные &quot;Типо блокноты&quot;.</span>
<span class="t" style='left:562px;top:415px;font-size:14px;line-height:18px;color:#000;font-family:"Liberation Mono", monospace;letter-spacing:-0.4px;-webkit-text-stroke:.1px #000;'>Ога, они тоже этот текст из буфера принимают, но не позволяют</span>
<span class="t" style='left:562px;top:433px;font-size:14px;line-height:18px;color:#000;font-family:"Liberation Mono", monospace;letter-spacing:-0.4px;-webkit-text-stroke:.1px #000;'>сохранить в виде файла в доступн</span>
</div>
</div>
</body></html>
